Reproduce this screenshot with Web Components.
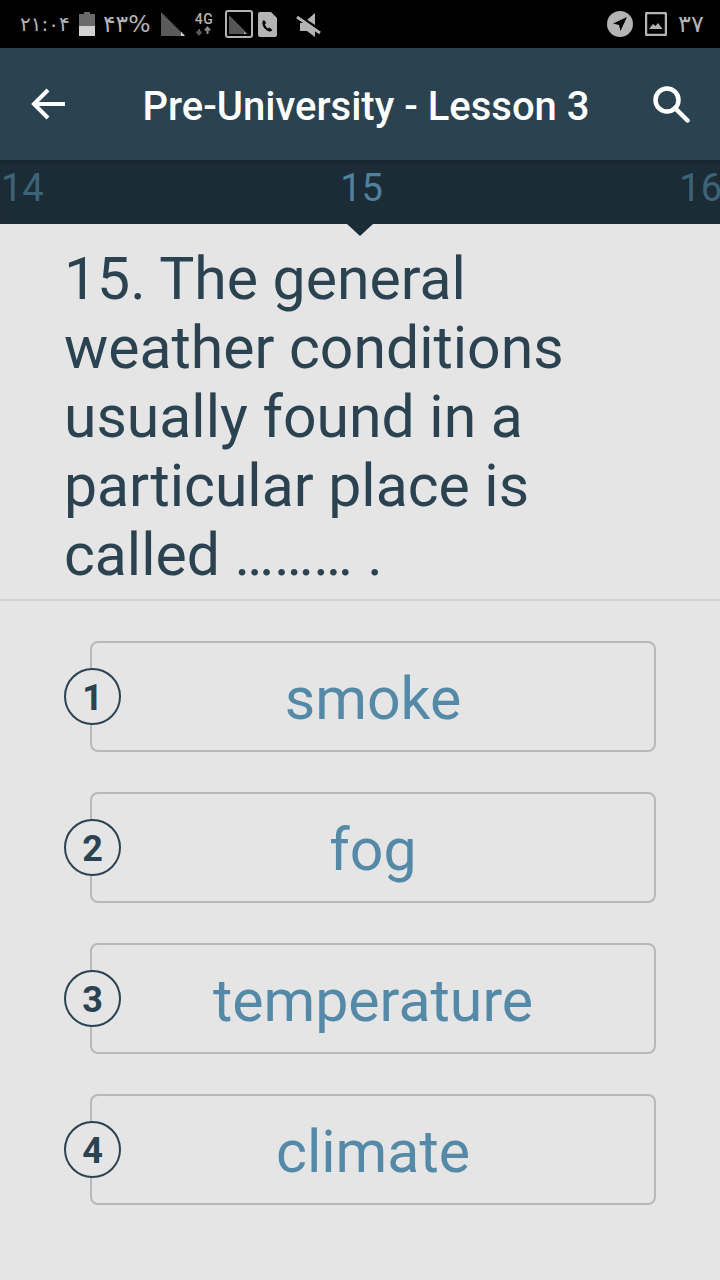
<!DOCTYPE html>
<html>
<head>
<meta charset="utf-8">
<style>
html, body { margin: 0; padding: 0; background: #e5e5e5; }
body { width: 720px; height: 1280px; overflow: hidden; font-family: Roboto, sans-serif; }
</style>
</head>
<body>
<status-bar></status-bar>
<lesson-toolbar title="Pre-University - Lesson 3"></lesson-toolbar>
<page-strip prev="14" current="15" next="16"></page-strip>
<question-text>15. The general weather conditions usually found in a particular place is called ……… .</question-text>
<answer-list>
    <answer-option num="1">smoke</answer-option>
    <answer-option num="2">fog</answer-option>
    <answer-option num="3">temperature</answer-option>
    <answer-option num="4">climate</answer-option>
</answer-list>

<script>
class StatusBar extends HTMLElement {
    constructor() {
        super();
        this.attachShadow({ mode: 'open' });
    }

    connectedCallback() {
        this.shadowRoot.innerHTML = `
        <style>
        :host {
            display: flex;
            align-items: center;
            height: 48px;
            background: #000;
            color: #b4b4b4;
            font-family: "DejaVu Sans", sans-serif;
            font-size: 20px;
        }
        .left, .right { display: flex; align-items: center; }
        .left { padding-left: 20px; flex: 1; }
        .right { padding-right: 14px; }
        svg { display: block; flex: none; }
        span { line-height: 48px; white-space: nowrap; }
        .time { width: 50px; margin-right: 9px; font-size: 20px; }
        .pct { width: 47px; margin-left: 8px; margin-right: 11px; font-size: 23.500px; }
        .day { margin-left: 11px; width: 28px; font-size: 24px; letter-spacing: 2px; }
        </style>
        <div class="left">
            <span class="time" dir="ltr">۲۱:۰۴</span>
            <svg width="16" height="24" viewBox="0 0 16 24">
                <rect x="5" y="0" width="6" height="3" fill="#6a6a6a"/>
                <rect x="0" y="2" width="16" height="12" fill="#6a6a6a"/>
                <rect x="0" y="14" width="16" height="10" fill="#d2d2d2"/>
            </svg>
            <span class="pct" dir="ltr">۴۳%</span>
            <svg width="24" height="24" viewBox="0 0 24 24">
                <path d="M0 0L24 24H0Z" fill="#5a5a5a"/>
                <path d="M20 19.500L24 24H20Z" fill="#d0d0d0"/>
            </svg>
            <svg width="20" height="26" viewBox="0 0 20 26" style="margin-left:9px;margin-right:11px">
                <text x="10" y="13" text-anchor="middle" font-family="Roboto" font-weight="500" font-size="14" letter-spacing="0.500" fill="#b4b4b4">4G</text>
                <path d="M5 18v5M2.500 20.500L5 23.500L7.500 20.500" stroke="#5a5a5a" stroke-width="2" fill="none"/>
                <path d="M13.500 23v-6M11 19.500L13.500 16.500L16 19.500" stroke="#8a8a8a" stroke-width="2" fill="none"/>
            </svg>
            <svg width="28" height="28" viewBox="0 0 28 28">
                <rect x="1" y="1" width="26" height="26" rx="2" fill="none" stroke="#b4b4b4" stroke-width="2"/>
                <path d="M4 5L23 24H4Z" fill="#555"/>
                <path d="M19 22l2 2h-2z" fill="#d0d0d0"/>
            </svg>
            <svg width="20" height="25" viewBox="0 0 20 25" style="margin-left:5px">
                <path d="M2 0H13L19 6V23a2 2 0 0 1-2 2H2a2 2 0 0 1-2-2V2a2 2 0 0 1 2-2Z" fill="#b4b4b4"/>
                <path d="M6 8c-1.500 1-2 2.500-1.500 4.500c.8 3 3 5.500 6 6.800c1.500.5 3 0 3.800-1.300l-2.800-2.500l-1.700 1c-1.500-1-2.500-2.500-3-4.200l1.500-1.200z" fill="#000"/>
            </svg>
            <svg width="26" height="28" viewBox="0 0 26 28" style="margin-left:17px">
                <path d="M20 3L12 10L20 15Z" fill="#b4b4b4"/>
                <path d="M5 13V21H12L20 27V20L10 13Z" fill="#b4b4b4"/>
                <path d="M1 4L24 20" stroke="#000" stroke-width="3"/>
                <path d="M2 7L25 23" stroke="#b4b4b4" stroke-width="3"/>
            </svg>
        </div>
        <div class="right">
            <svg width="26" height="26" viewBox="0 0 26 26">
                <circle cx="13" cy="13" r="13" fill="#b4b4b4"/>
                <path d="M20 6L6 12.500L12 14L13.500 20Z" fill="#000"/>
            </svg>
            <svg width="22" height="24" viewBox="0 0 22 24" style="margin-left:12px">
                <rect x="1" y="1" width="20" height="22" rx="1.500" fill="none" stroke="#b4b4b4" stroke-width="2.500"/>
                <path d="M4 17L8 12L10.500 14L13 11L17.500 17Z" fill="#b4b4b4"/>
            </svg>
            <span class="day" dir="ltr">۳۷</span>
        </div>
        `;
    }
}

class LessonToolbar extends HTMLElement {
    constructor() {
        super();
        this.attachShadow({ mode: 'open' });
    }

    connectedCallback() {
        this.shadowRoot.innerHTML = `
        <style>
        :host {
            display: grid;
            grid-template-columns: 96px 1fr 96px;
            align-items: center;
            height: 112px;
            background: #2b4251;
            color: #fff;
            box-sizing: border-box;
        }
        .title {
            text-align: center;
            font: 500 40px/48px Roboto, sans-serif;
            white-space: nowrap;
            padding: 6px 0 0 20px;
            margin-right: 8px;
        }
        svg { display: block; }
        .back { justify-self: start; margin-left: 30px; }
        .search { justify-self: end; margin-right: 30px; }
        </style>
        <svg class="back" width="36" height="36" viewBox="0 0 36 36" fill="none" stroke="#fff" stroke-width="4">
            <path d="M35 18H4"/>
            <path d="M18 4L4 18L18 32"/>
        </svg>
        <div class="title">${this.getAttribute('title')}</div>
        <svg class="search" width="38" height="38" viewBox="0 0 38 38" fill="none" stroke="#fff" stroke-width="4.500">
            <circle cx="15" cy="15" r="11.500"/>
            <path d="M23 23L35.500 35.500" stroke-linecap="round"/>
        </svg>
        `;
    }
}

class PageStrip extends HTMLElement {
    constructor() {
        super();
        this.attachShadow({ mode: 'open' });
    }

    connectedCallback() {
        this.shadowRoot.innerHTML = `
        <style>
        :host {
            display: flex;
            justify-content: space-between;
            position: relative;
            height: 64px;
            margin-right: -2px;
            padding-left: 1px;
            background: #1c2c37;
            box-shadow: inset 0 4px 4px -2px rgba(0, 0, 0, 0.2);
            color: #3d6378;
            font: 400 38px/56px Roboto, sans-serif;
            overflow: visible;
        }
        .now { color: #4f819f; }
        .arrow {
            position: absolute;
            left: 347px;
            top: 64px;
            width: 0;
            height: 0;
            border-left: 13px solid transparent;
            border-right: 13px solid transparent;
            border-top: 12px solid #1c2c37;
        }
        </style>
        <span>${this.getAttribute('prev')}</span>
        <span class="now">${this.getAttribute('current')}</span>
        <span>${this.getAttribute('next')}</span>
        <div class="arrow"></div>
        `;
    }
}

class QuestionText extends HTMLElement {
    constructor() {
        super();
        this.attachShadow({ mode: 'open' });
    }

    connectedCallback() {
        this.shadowRoot.innerHTML = `
        <style>
        :host {
            display: block;
            box-sizing: border-box;
            height: 377px;
            padding: 20px 60px 0 64px;
            border-bottom: 2px solid #d2d2d2;
            color: #2b4251;
            font: 400 58.900px/69px Roboto, sans-serif;
        }
        </style>
        <slot></slot>
        `;
    }
}

class AnswerList extends HTMLElement {
    constructor() {
        super();
        this.attachShadow({ mode: 'open' });
    }

    connectedCallback() {
        this.shadowRoot.innerHTML = `
        <style>
        :host {
            display: flex;
            flex-direction: column;
            gap: 40px;
            padding: 40px 64px 0 90px;
        }
        </style>
        <slot></slot>
        `;
    }
}

class AnswerOption extends HTMLElement {
    constructor() {
        super();
        this.attachShadow({ mode: 'open' });
    }

    connectedCallback() {
        this.shadowRoot.innerHTML = `
        <style>
        :host {
            display: flex;
            align-items: center;
            justify-content: center;
            position: relative;
            box-sizing: border-box;
            height: 111px;
            padding-top: 4px;
            border: 2px solid #b8b8b8;
            border-radius: 8px;
            color: #5589a8;
            font: 400 59px/1 Roboto, sans-serif;
        }
        .num {
            position: absolute;
            left: -28px;
            top: 25px;
            box-sizing: border-box;
            width: 57px;
            height: 57px;
            padding-top: 2px;
            display: flex;
            align-items: center;
            justify-content: center;
            border: 2px solid #2b4251;
            border-radius: 50%;
            background: #e5e5e5;
            color: #2b4251;
            font: 700 36px/1 Roboto, sans-serif;
        }
        </style>
        <div class="num">${this.getAttribute('num')}</div>
        <slot></slot>
        `;
    }
}

customElements.define('status-bar', StatusBar);
customElements.define('lesson-toolbar', LessonToolbar);
customElements.define('page-strip', PageStrip);
customElements.define('question-text', QuestionText);
customElements.define('answer-list', AnswerList);
customElements.define('answer-option', AnswerOption);
</script>
</body>
</html>
